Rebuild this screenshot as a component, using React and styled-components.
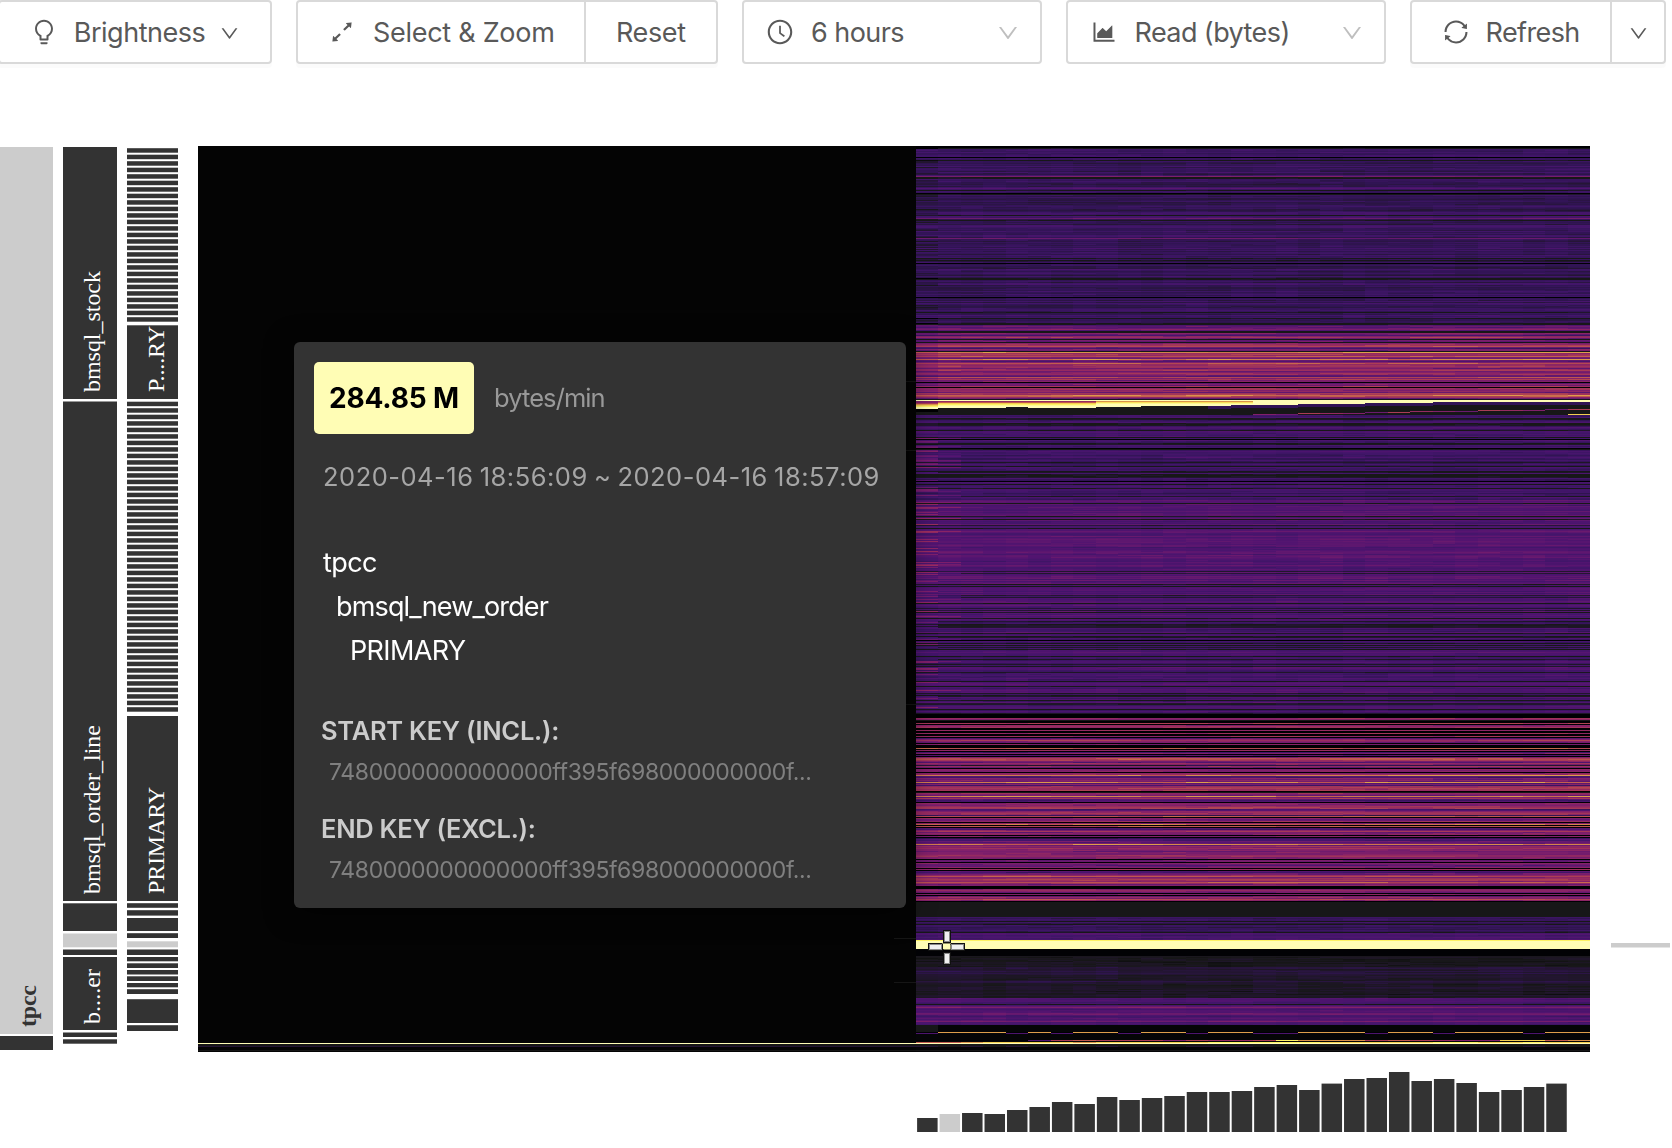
import React, { useLayoutEffect, useRef } from 'react';
import styled, { createGlobalStyle } from 'styled-components';
import {
  AiOutlineBulb,
  AiOutlineDown,
  AiOutlineArrowsAlt,
  AiOutlineClockCircle,
  AiOutlineAreaChart,
  AiOutlineSync,
} from 'react-icons/ai';

const GlobalStyle = createGlobalStyle`
  * { box-sizing: border-box; }
  body {
    margin: 0;
    background: #fff;
    font-family: Inter, "Liberation Sans", sans-serif;
    overflow: hidden;
  }
`;

const Page = styled.div`
  width: 1672px;
  height: 1148px;
  overflow: hidden;
  display: flex;
  flex-direction: column;
  background: #fff;
`;

/* ---------- toolbar ---------- */

const Toolbar = styled.div`
  display: flex;
  align-items: flex-start;
  gap: 24px;
  height: 146px;
  margin-left: -2px;
`;

const Group = styled.div`
  display: flex;
  width: ${(p) => p.$w}px;
  height: 64px;
  flex: none;
  border: 2px solid #d9d9d9;
  border-radius: 4px;
  box-shadow: ${(p) => (p.$flat ? 'none' : '0 4px 0 rgba(0, 0, 0, 0.016)')};
`;

const Cell = styled.div`
  display: flex;
  align-items: center;
  flex: ${(p) => (p.$w ? 'none' : 1)};
  width: ${(p) => (p.$w ? `${p.$w}px` : 'auto')};
  padding-left: ${(p) => p.$pad}px;
  color: #595959;
  & + & {
    border-left: 2px solid #d9d9d9;
  }
`;

const Label = styled.span`
  font-size: 27px;
  line-height: 40px;
  padding-top: 2px;
  white-space: nowrap;
  margin-left: ${(p) => p.$ml || 0}px;
  letter-spacing: ${(p) => p.$ls || 0}px;
`;

const Icon = styled.span`
  display: flex;
  flex: none;
  font-size: ${(p) => p.$size || 28}px;
  margin-left: ${(p) => p.$ml || 0}px;
  margin-right: ${(p) => p.$mr || 0}px;
  padding-top: ${(p) => p.$pt || 0}px;
  color: ${(p) => (p.$muted ? '#bfbfbf' : 'inherit')};
`;

const Spacer = styled.span`
  flex: 1;
`;

/* ---------- chart ---------- */

const ChartRow = styled.div`
  display: grid;
  grid-template-columns: 198px 1392px 82px;
  height: 906px;
`;

const AxisSvg = styled.svg`
  display: block;
  font-family: "Liberation Serif", "Times New Roman", serif;
  font-size: 24px;
`;

const MapArea = styled.div`
  position: relative;
  background: #040404;
`;

const MapCanvas = styled.canvas`
  display: block;
`;

const Cursor = styled.svg`
  position: absolute;
  left: 730px;
  top: 783px;
`;

const Tooltip = styled.div`
  position: absolute;
  left: 96px;
  top: 196px;
  width: 612px;
  height: 566px;
  padding: 20px 20px 0;
  border-radius: 6px;
  background: #333;
  box-shadow: 0 4px 28px rgba(0, 0, 0, 0.6);
`;

const ValueRow = styled.div`
  display: flex;
  align-items: center;
  gap: 20px;
`;

const Badge = styled.div`
  display: flex;
  align-items: center;
  justify-content: center;
  width: 160px;
  height: 72px;
  border-radius: 5px;
  background: #fffdb5;
  color: #000;
  font-size: 28px;
  font-weight: 700;
  letter-spacing: -0.15px;
`;

const Line = styled.div`
  height: ${(p) => p.$h}px;
  line-height: ${(p) => p.$h}px;
  margin-top: ${(p) => p.$mt || 0}px;
  margin-left: ${(p) => p.$ml || 0}px;
  font-size: ${(p) => p.$size}px;
  font-weight: ${(p) => p.$weight || 400};
  letter-spacing: ${(p) => p.$ls || 0}px;
  word-spacing: ${(p) => p.$ws || 0}px;
  color: ${(p) => p.$color};
  white-space: nowrap;
`;

const Bottom = styled.div`
  height: 96px;
  padding-left: 916px;
`;

/* ---------- heat map data ---------- */

const PALETTE = [
  [0, 0, 3], [23, 23, 24], [36, 21, 52], [49, 20, 85], [66, 21, 106],
  [82, 20, 112], [107, 26, 110], [130, 32, 106], [150, 42, 96], [170, 60, 85],
  [192, 90, 78], [217, 146, 74], [243, 206, 80], [253, 242, 100], [255, 253, 181],
];

function colorOf(v) {
  const x = Math.max(0, Math.min(14, v));
  const i = Math.min(13, Math.floor(x));
  const f = x - i;
  return PALETTE[i].map((c, k) => Math.round(c + (PALETTE[i + 1][k] - c) * f));
}

function seeded(seed) {
  let s = seed;
  return () => {
    s = (s * 1664525 + 1013904223) % 4294967296;
    return s / 4294967296;
  };
}

const TOP = 146;
const ROWS = 906;
const COLS = 30;
const levels = (text) => text.split('').map((c) => parseInt(c, 16));

const HOT = levels(
  '565675117647961661789A6476' + '1B898A76B657A8898689678865A7967' + '0676908878699BA8617A1E',
);
const STRIPES = levels(
  '00087100907880080080080579' +
    '7607000A08047050' + '7AA9758728607770' + '78B547676B574899' + '8901876B69545077' +
    '78994578883A0766' + '807B0A0547967707' + '0354656B68787767' + '7788770660765670' +
    '8054668A78997A86' + '70007876070687A700',
);

const DARK = new Set([
  148, 160, 177, 178, 190, 194, 215, 220, 258, 260, 278, 279, 312, 318, 323, 324, 418, 423, 424,
  430, 437, 443, 449, 466, 471, 474, 475, 476, 484, 488, 503, 516, 519, 528, 584, 586, 603, 612,
  618, 624, 633, 636, 643, 645, 649, 656, 681, 686, 695, 700, 709, 921, 924, 932, 1004,
]);
const BLACK = new Set([157, 193, 263, 297, 439, 448, 481, 640, 714]);
const WARM = { 176: 6.6, 188: 5, 218: 6, 238: 6, 1007: 7, 1013: 6, 1014: 6, 1021: 6.5 };

function baseLevel(y, r) {
  if (y < 148) return 0;
  if (BLACK.has(y)) return 0;
  if (DARK.has(y)) return 1;
  if (WARM[y]) return WARM[y];
  if (y < 325) return 2.3 + r * 1.8;
  if (y <= 400) return HOT[y - 325] ?? 7;
  if (y < 415) return 1;
  if (y < 500) return r < 0.12 ? 1.6 : 2.8 + r * 1.9;
  if (y < 620) return r < 0.07 ? 2 : 3.9 + r * 1.8;
  if (y < 715) return r < 0.12 ? 1.6 : 3.1 + r * 2.1;
  if (y < 902) return STRIPES[y - 715] ?? 6;
  if (y < 917) return 1;
  if (y < 933) return 2.4 + r * 1.5;
  if (y < 940) return 3.4 + r * 1.5;
  if (y < 941) return 13;
  if (y < 949) return 14;
  if (y < 956) return 0.1;
  if (y < 967) return 1.2;
  if (y < 983) return 1.5 + r;
  if (y < 998) return 1.1 + r * 0.7;
  if (y < 1025) return 3.8 + r * 1.7;
  return 0.2;
}

const RISE_END = [408, 407, 407, 407, 406, 407, 407, 407, 406, 406, 405, 405, 405, 405, 404, 404,
  404, 403, 403, 403, 402, 402, 402, 401, 401, 401, 401, 401, 401, 401];
const DASH = '011101011011011001110110111011';
const LOWER = [0, 0, 0, 0, 0, 5, 9, 10, 9, 9, 9, 7, 9, 8, 8, 9, 13, 11, 11, 11, 9, 10, 9, 8, 7, 7, 12,
  12, 10, 11];
const FLOOR = [10, 10, 11, 12, 12, 12, 12, 11, 12, 12, 12, 12, 12, 13, 13, 13, 13, 13, 12, 12, 12,
  12, 12, 13, 13, 12, 12, 13, 12, 12];

function buildLevels() {
  const rand = seeded(71);
  const grid = [];
  let patch = [];
  let patchLeft = 0;
  for (let i = 0; i < ROWS; i += 1) {
    const y = TOP + i;
    if (patchLeft <= 0) {
      patchLeft = 5 + Math.floor(rand() * 13);
      patch = Array.from({ length: COLS }, () => (rand() - 0.5) * 0.5);
    }
    patchLeft -= 1;
    const base = baseLevel(y, rand());
    const purple = (y < 325 && y >= 148) || (y >= 415 && y < 715) || (y > 917 && y < 940)
      || (y > 956 && y < 1025);
    const striped = (y >= 325 && y < 400) || (y >= 715 && y < 902);
    const hotStart = rand();
    const row = [];
    let drift = 0;
    for (let c = 0; c < COLS; c += 1) {
      if (rand() < 0.42) drift = (rand() - 0.5) * (striped ? 1.5 : 0.8);
      let v = base;
      if (purple && base > 1) v = base + drift + patch[c];
      if (purple && base === 1 && rand() < 0.15) v = 1.7;
      if (striped && base > 1) v = Math.min(11.2, (base > 8 ? base - 0.4 : base) + drift);
      if (c === 0 && y > 436 && y < 715 && base > 1) v += hotStart < 0.35 ? 2.4 : -0.2;
      if (c === 0 && y < 325 && hotStart < 0.25) v -= 1.2;
      if (c === 1 && y > 415 && y < 700 && hotStart < 0.12 && base > 1) v += 1.5;
      if (c === 0 && y > 325 && y < 400 && base > 1) v -= 0.7;
      if (y === 400) v = 14;
      if (y > 400 && y < 415) {
        const end = RISE_END[c];
        if (y <= end) {
          const left = c < 8 ? [8, 10, 12, 13, 13.6, 14, 14, 14] : [11, 12.5, 13.5, 14, 14, 14, 14, 14];
          v = c > 14 ? 14 : left[y - 401];
          if (c === 0) v = [7, 7, 9, 11, 12, 13, 14, 14][y - 401];
        } else if (c > 12 && y < end + 4) v = 3;
        else v = c === 0 && y < 412 ? 0 : 1;
        if (c > 14 && y === 414 - Math.round((c - 15) * 0.36)) v = 6 + ((c * 7) % 4);
        if (c === 29 && y === 414) v = 12;
      }
      if (y >= 1025 && y < 1032 && c === 0) v = 1;
      if (y === 1032) v = DASH[c] === '1' ? 11.2 : 0;
      if (y === 1033) v = DASH[c] === '1' ? 0.3 : 4.6;
      if (y === 1040) v = LOWER[c];
      if (y === 1042) v = FLOOR[c];
      if (y === 1043) v = 14;
      if (y === 1044 || y === 1045 || y === 1050) v = 1;
      if (y === 1046) v = rand() < 0.3 ? 2 : 1;
      row.push(v);
    }
    grid.push(row);
  }
  return grid;
}

function HeatMap() {
  const ref = useRef(null);
  useLayoutEffect(() => {
    const ctx = ref.current.getContext('2d');
    ctx.fillStyle = '#040404';
    ctx.fillRect(0, 0, 1392, ROWS);
    const grid = buildLevels();
    grid.forEach((row, y) => {
      row.forEach((v, c) => {
        const x0 = Math.round(718 + c * 22.47);
        const x1 = c === COLS - 1 ? 1392 : Math.round(718 + (c + 1) * 22.47);
        ctx.fillStyle = `rgb(${colorOf(v).join(',')})`;
        ctx.fillRect(x0, y, x1 - x0, 1);
      });
    });
    ctx.fillStyle = '#161616';
    [235, 304, 558, 792, 836].forEach((y) => ctx.fillRect(696, y, 22, 1));
    ctx.fillStyle = '#fffdb5';
    ctx.fillRect(0, 897, 718, 1);
    ctx.fillStyle = '#161616';
    ctx.fillRect(0, 898, 718, 2);
    ctx.fillRect(0, 904, 718, 1);
    ctx.fillStyle = '#241534';
    ctx.fillRect(0, 900, 718, 1);
  }, []);
  return <MapCanvas ref={ref} width={1392} height={ROWS} />;
}

/* ---------- axes ---------- */

const TABLES = [
  [147, 399], [401.5, 901], [903.3, 931], [933.5, 947.3, 1], [949.5, 955], [957, 1030],
  [1032.5, 1037], [1039.3, 1043.7],
];
const INDEXES = [
  ...Array.from({ length: 27 }, (_, i) => [148.2 + i * 6.5, 152.7 + i * 6.5]),
  [325.3, 399],
  ...Array.from({ length: 48 }, (_, i) => [401.7 + i * 6.5, 406.2 + i * 6.5]),
  [716, 901], [903.2, 907.8], [910.2, 915.6], [918, 931], [933.2, 938], [941.3, 947.3, 1],
  [949.5, 955], [957, 961.3], [963.3, 968], [970, 974.5], [976.3, 981], [983, 987.3],
  [989.2, 994], [999.2, 1023], [1025.2, 1031],
];

const KEY_LABELS = [
  { x: 100, y: 392, len: 121, text: 'bmsql_stock' },
  { x: 100, y: 894, len: 169, text: 'bmsql_order_line' },
  { x: 100, y: 1024, len: 55, text: 'b....er' },
  { x: 164, y: 392, len: 66, text: 'P....RY' },
  { x: 164, y: 894, len: 107, text: 'PRIMARY' },
];

function KeyAxis() {
  const bar = (x, w) => ([a, b, light]) => (
    <rect key={`${x}-${a}`} x={x} y={a - TOP} width={w} height={b - a} fill={light ? '#ccc' : '#333'} />
  );
  return (
    <AxisSvg width="198" height="906">
      {bar(0, 53)([147, 1034, 1])}
      {bar(0, 53)([1036, 1050])}
      {TABLES.map(bar(63, 54))}
      {INDEXES.map(bar(127, 51))}
      <text
        transform={`translate(36 ${1027 - TOP}) rotate(-90)`}
        fontWeight="700"
        fill="#333"
        textLength="42"
      >
        tpcc
      </text>
      {KEY_LABELS.map((l) => (
        <text
          key={`${l.x}-${l.text}`}
          transform={`translate(${l.x} ${l.y - TOP}) rotate(-90)`}
          fill="#fff"
          textLength={l.len}
        >
          {l.text}
        </text>
      ))}
    </AxisSvg>
  );
}

const TRAFFIC = [14, 18, 19, 18, 22, 25, 30, 28, 35, 32, 34, 36, 40, 40, 41, 45, 47, 42, 48.4, 53, 54,
  60, 51, 53, 49, 40, 42, 45, 48.4];

function TrafficBars() {
  return (
    <AxisSvg width="680" height="96">
      {TRAFFIC.map((h, i) => (
        <rect
          key={i}
          x={1.1 + i * 22.47}
          y={80 - h}
          width="20.5"
          height={h}
          fill={i === 1 ? '#ccc' : '#333'}
        />
      ))}
    </AxisSvg>
  );
}

const ARMS = [
  [16, 2, 6, 11],
  [16, 24, 6, 11],
  [1, 15, 13, 6],
  [23, 15, 13, 6],
];

function Crosshair() {
  return (
    <Cursor width="38" height="38">
      {ARMS.map(([x, y, w, h]) => (
        <rect key={`o${x}-${y}`} x={x - 1} y={y - 1} width={w + 2} height={h + 2} fill="#111" />
      ))}
      {ARMS.map(([x, y, w, h]) => (
        <rect
          key={`i${x}-${y}`}
          x={x + 0.5}
          y={y + 0.5}
          width={w - 1}
          height={h - 1}
          fill="#f0f0f0"
          stroke="#8a8a8a"
        />
      ))}
      <rect x="15.5" y="15.5" width="7" height="5" fill="#fffdb5" />
      <rect x="14" y="14" width="9" height="1" fill="#8f8d66" />
    </Cursor>
  );
}

export default function App() {
  return (
    <Page>
      <GlobalStyle />
      <Toolbar>
        <Group $w={274}>
          <Cell $pad={30}>
            <Icon><AiOutlineBulb /></Icon>
            <Label $ml={15.7} $ls={-0.47}>Brightness</Label>
            <Icon $ml={14} $size={21} $pt={2}><AiOutlineDown /></Icon>
          </Cell>
        </Group>
        <Group $w={422}>
          <Cell $w={286} $pad={30}>
            <Icon><AiOutlineArrowsAlt /></Icon>
            <Label $ml={17} $ls={-0.28}>Select &amp; Zoom</Label>
          </Cell>
          <Cell $pad={30}>
            <Label $ls={-0.38}>Reset</Label>
          </Cell>
        </Group>
        <Group $w={300} $flat>
          <Cell $pad={22}>
            <Icon><AiOutlineClockCircle /></Icon>
            <Label $ml={17} $ls={-0.55}>6 hours</Label>
            <Spacer />
            <Icon $muted $size={24} $mr={20} $pt={2}><AiOutlineDown /></Icon>
          </Cell>
        </Group>
        <Group $w={320} $flat>
          <Cell $pad={22}>
            <Icon><AiOutlineAreaChart /></Icon>
            <Label $ml={16.5} $ls={-0.58}>Read (bytes)</Label>
            <Spacer />
            <Icon $muted $size={24} $mr={20} $pt={2}><AiOutlineDown /></Icon>
          </Cell>
        </Group>
        <Group $w={256}>
          <Cell $w={198} $pad={30}>
            <Icon><AiOutlineSync /></Icon>
            <Label $ml={15.5} $ls={-0.6}>Refresh</Label>
          </Cell>
          <Cell $pad={15.5}>
            <Icon $size={21} $pt={2}><AiOutlineDown /></Icon>
          </Cell>
        </Group>
      </Toolbar>
      <ChartRow>
        <KeyAxis />
        <MapArea>
          <HeatMap />
          <Tooltip>
            <ValueRow>
              <Badge>284.85 M</Badge>
              <Line $h={40} $size={25.5} $ls={-0.92} $color="#999">bytes/min</Line>
            </ValueRow>
            <Line $h={40} $mt={23} $ml={9} $size={25.5} $ls={0.5} $ws={-1.5} $color="#a6a6a6">
              2020-04-16 18:56:09 ~ 2020-04-16 18:57:09
            </Line>
            <Line $h={44} $mt={44} $ml={9} $size={27} $ls={-0.6} $color="#fff">tpcc</Line>
            <Line $h={44} $ml={22} $size={27} $ls={-0.84} $color="#fff">bmsql_new_order</Line>
            <Line $h={44} $ml={36} $size={27} $ls={-0.65} $color="#fff">PRIMARY</Line>
            <Line $h={40} $mt={38} $ml={7} $size={25.5} $ls={-0.27} $weight={600} $color="#ccc">
              START KEY (INCL.):
            </Line>
            <Line $h={36} $mt={3} $ml={15} $size={23} $ls={-0.38} $color="#808080">
              7480000000000000ff395f698000000000f...
            </Line>
            <Line $h={40} $mt={19} $ml={7} $size={25.5} $ls={-0.27} $weight={600} $color="#ccc">
              END KEY (EXCL.):
            </Line>
            <Line $h={36} $mt={3} $ml={15} $size={23} $ls={-0.38} $color="#808080">
              7480000000000000ff395f698000000000f...
            </Line>
          </Tooltip>
          <Crosshair />
        </MapArea>
        <AxisSvg width="82" height="906">
          <rect x="21" y="797" width="59" height="4.5" fill="#ccc" />
        </AxisSvg>
      </ChartRow>
      <Bottom>
        <TrafficBars />
      </Bottom>
    </Page>
  );
}
